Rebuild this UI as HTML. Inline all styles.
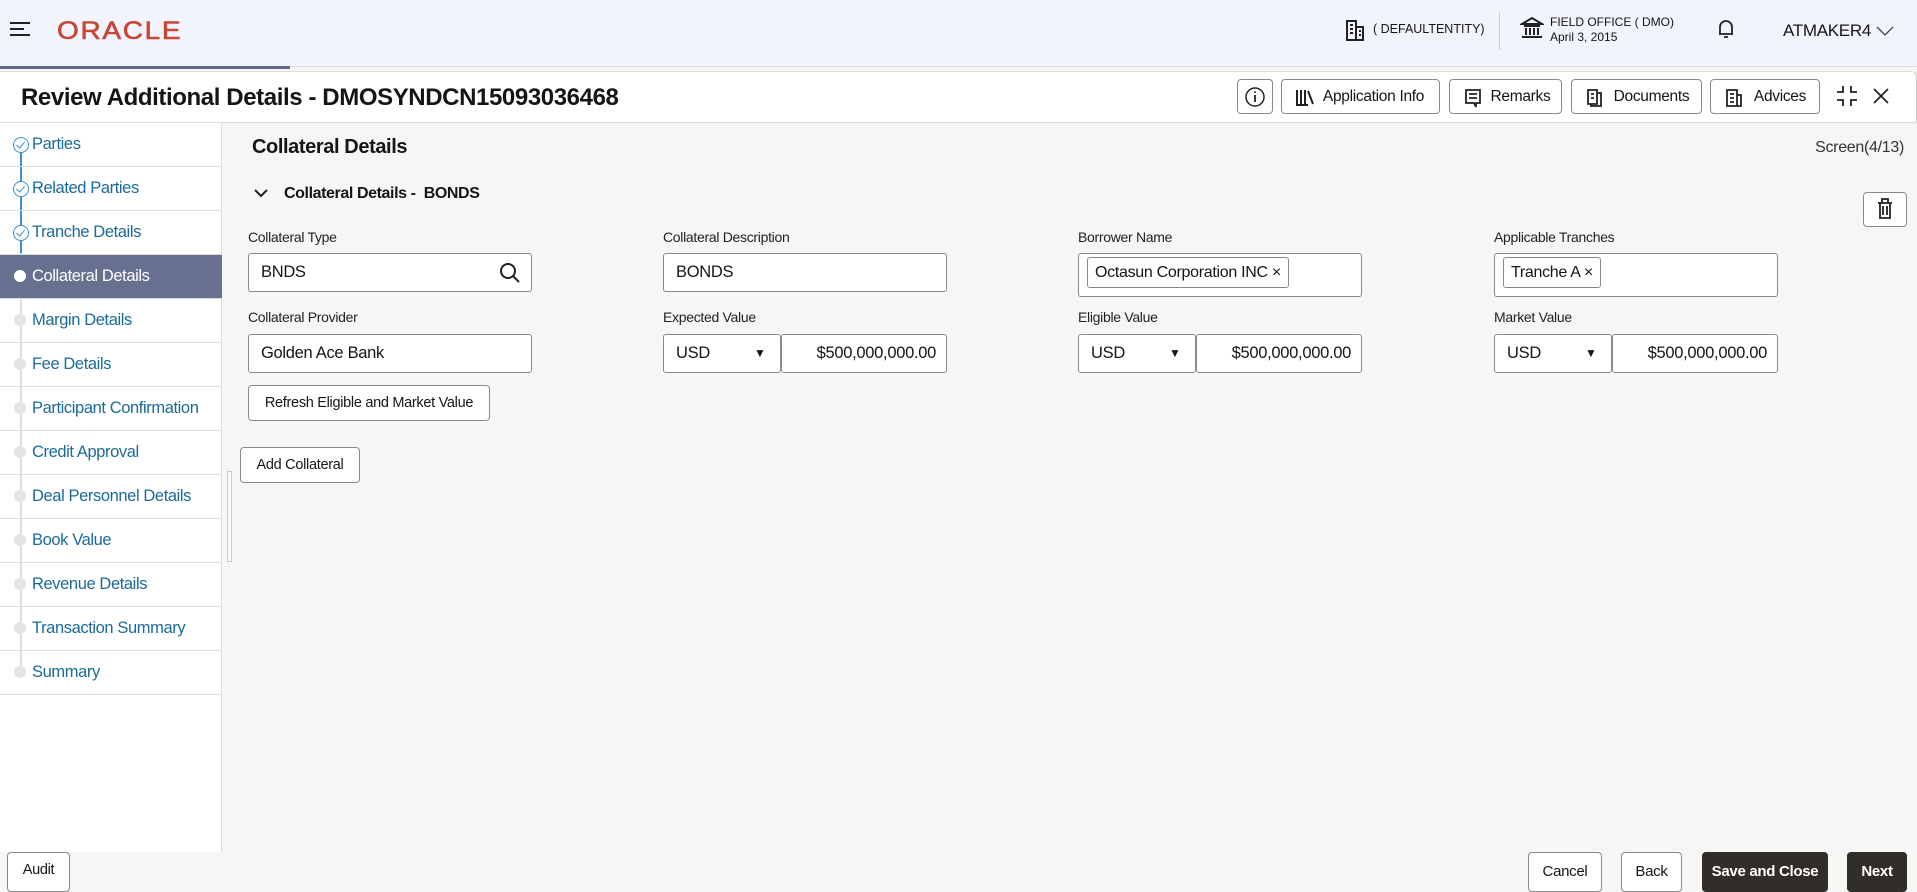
<!DOCTYPE html>
<html><head><meta charset="utf-8"><style>
*{box-sizing:border-box;margin:0;padding:0}
body{width:1917px;height:887px;overflow:hidden;font-family:"Liberation Sans",sans-serif;color:#161513;background:#f6f6f5;position:relative}
.abs{position:absolute}
.hdr{left:0;top:0;width:1917px;height:67px;background:#f1f4fc;border-bottom:1px solid #ddd}
.prog{left:0;top:66px;width:290px;height:3px;background:#5f6a8a}
.title{left:0;top:71px;width:1917px;height:52px;background:#fff;border-bottom:1px solid #ddd;border-top:1px solid #ddd;border-right:1px solid #ccc;border-top-right-radius:6px}
.side{left:0;top:123px;width:222px;height:729px;background:#fff;border-right:1px solid #ddd}
.item{position:absolute;left:0;width:222px;height:44px;border-bottom:1px solid #ddd;font-size:16.5px;color:#1a6a9a;padding-left:32px;line-height:42px;letter-spacing:-.4px}
.item.act{background:#687090;color:#fff}
.dot{position:absolute;left:14px;top:15px;width:12px;height:12px;border-radius:50%;background:#e4e4e4}
.act .dot{background:#fff}
.chk{position:absolute;left:13px;top:14px;width:16px;height:16px;border:1.5px solid #3a8fd0;border-radius:50%;background:#fff}
.chk:after{content:"";position:absolute;left:4px;top:2px;width:4px;height:7px;border:solid #3a8fd0;border-width:0 1.3px 1.3px 0;transform:rotate(40deg)}
.vline{position:absolute;left:20px;width:1.5px;background:#3a8fd0}
.lbl{position:absolute;font-size:14px;color:#222;letter-spacing:-.3px}
.inp{position:absolute;height:39px;background:#fff;border:1px solid #8a8a8a;border-radius:3px;font-size:16.5px;line-height:37px;padding-left:12px;letter-spacing:-.3px}
.btn{position:absolute;background:#fff;border:1px solid #8a8a8a;border-radius:4px;font-size:14.5px;text-align:center;letter-spacing:-.3px}
.chip{display:inline-block;border:1px solid #8a8a8a;border-radius:3px;height:31px;line-height:29px;padding:0 7px;margin:3px 0 0 -4px;font-size:16px}
.dark{background:#312d2a;color:#fff;border-color:#312d2a;font-weight:bold}
</style></head><body>
<div class="abs hdr"></div>
<div class="abs prog"></div>
<svg class="abs" style="left:9px;top:21px" width="24" height="16"><path d="M1 2h20M1 8h14M1 14h20" stroke="#222" stroke-width="2"/></svg>
<div class="abs" style="left:57px;top:18px;font-size:25px;line-height:26px;color:#c74634;letter-spacing:1.5px;transform:scaleX(1.12);transform-origin:left;-webkit-text-stroke:.6px #c74634">ORACLE</div>
<svg class="abs" style="left:1345px;top:19px" width="20" height="22"><path d="M2 21V2h9v19M11 8h7v13M1 21h18M5 6h3M5 10h3M5 14h3M14 12h2M14 16h2" stroke="#222" stroke-width="2" fill="none"/></svg>
<div class="abs" style="left:1373px;top:22px;font-size:12.5px">( DEFAULTENTITY)</div>
<div class="abs" style="left:1499px;top:12px;width:1px;height:38px;background:#ccc"></div>
<svg class="abs" style="left:1520px;top:16px" width="24" height="24"><path d="M2 8L12 2l10 6zM4 10h16M6 12v7M10 12v7M14 12v7M18 12v7M2 21h20" stroke="#222" stroke-width="2" fill="none"/></svg>
<div class="abs" style="left:1550px;top:15px;font-size:12px;line-height:15px">FIELD OFFICE ( DMO)<br>April 3, 2015</div>
<svg class="abs" style="left:1717px;top:18px" width="18" height="22"><path d="M3 16V9a6 6 0 0112 0v7H2h14M7 19h4" stroke="#222" stroke-width="1.8" fill="none"/></svg>
<div class="abs" style="left:1783px;top:21px;font-size:17px;letter-spacing:-.3px">ATMAKER4</div>
<svg class="abs" style="left:1876px;top:25px" width="18" height="12"><path d="M1 2l8 8 8-8" stroke="#444" stroke-width="1.3" fill="none"/></svg>

<div class="abs title"></div>
<div class="abs" style="left:21px;top:84px;font-size:24px;font-weight:bold;letter-spacing:-.4px">Review Additional Details - DMOSYNDCN15093036468</div>
<div class="btn" style="left:1237px;top:79px;width:36px;height:35px"><svg width="22" height="22" style="margin-top:6px"><circle cx="11" cy="11" r="9" stroke="#222" stroke-width="1.5" fill="none"/><path d="M11 9v7M11 5.5v1.5" stroke="#222" stroke-width="1.8"/></svg></div>
<div class="btn" style="left:1281px;top:79px;width:159px;height:35px;line-height:33px;font-size:15.5px;padding-left:26px">Application Info<svg class="abs" style="left:13px;top:8px" width="20" height="18"><path d="M2 2v14M6 2v14M10 2v14M13 3l5 13M1 17h12" stroke="#222" stroke-width="2" fill="none"/></svg></div>
<div class="btn" style="left:1449px;top:79px;width:113px;height:35px;line-height:33px;font-size:15.5px;padding-left:30px">Remarks<svg class="abs" style="left:14px;top:8px" width="18" height="20"><path d="M2 2h14v13h-4v4l-2-4H2zM5 6h8M5 10h8" stroke="#222" stroke-width="1.8" fill="none"/></svg></div>
<div class="btn" style="left:1571px;top:79px;width:131px;height:35px;line-height:33px;font-size:15.5px;padding-left:30px">Documents<svg class="abs" style="left:14px;top:8px" width="18" height="20"><path d="M2 2h9v14H2zM11 5h4v13H5v-2M5 6h3M5 10h3" stroke="#222" stroke-width="1.8" fill="none"/></svg></div>
<div class="btn" style="left:1710px;top:79px;width:110px;height:35px;line-height:33px;font-size:15.5px;padding-left:30px">Advices<svg class="abs" style="left:14px;top:8px" width="18" height="20"><path d="M2 2h10v16H2zM12 7h4v11h-4M5 6h4M5 10h4M5 14h4" stroke="#222" stroke-width="1.8" fill="none"/></svg></div>
<svg class="abs" style="left:1836px;top:85px" width="22" height="22"><path d="M7 1v6H1M15 1v6h6M7 21v-6H1M15 21v-6h6" stroke="#222" stroke-width="1.8" fill="none"/></svg>
<svg class="abs" style="left:1873px;top:88px" width="16" height="16"><path d="M1 1l14 14M15 1L1 15" stroke="#222" stroke-width="1.8"/></svg>

<div class="abs side">
<div class="vline" style="top:20px;height:110px"></div>
<div class="vline" style="top:130px;height:420px;background:#ddd"></div>
<div class="item" style="top:0"><span class="chk"></span>Parties</div>
<div class="item" style="top:44px"><span class="chk"></span>Related Parties</div>
<div class="item" style="top:88px"><span class="chk"></span>Tranche Details</div>
<div class="item act" style="top:132px"><span class="dot"></span>Collateral Details</div>
<div class="item" style="top:176px"><span class="dot"></span>Margin Details</div>
<div class="item" style="top:220px"><span class="dot"></span>Fee Details</div>
<div class="item" style="top:264px"><span class="dot"></span>Participant Confirmation</div>
<div class="item" style="top:308px"><span class="dot"></span>Credit Approval</div>
<div class="item" style="top:352px"><span class="dot"></span>Deal Personnel Details</div>
<div class="item" style="top:396px"><span class="dot"></span>Book Value</div>
<div class="item" style="top:440px"><span class="dot"></span>Revenue Details</div>
<div class="item" style="top:484px"><span class="dot"></span>Transaction Summary</div>
<div class="item" style="top:528px"><span class="dot"></span>Summary</div>
</div>
<div class="abs" style="left:227px;top:471px;width:5px;height:91px;border:1px solid #ccc;background:#fafafa"></div>

<div class="abs" style="left:252px;top:136px;font-size:20px;font-weight:bold;letter-spacing:-.4px">Collateral Details</div>
<div class="abs" style="left:1810px;top:139px;font-size:16px;color:#333;width:94px;text-align:right;letter-spacing:-.3px">Screen(4/13)</div>
<svg class="abs" style="left:254px;top:189px" width="14" height="10"><path d="M1 1l6 6 6-6" stroke="#222" stroke-width="2" fill="none"/></svg>
<div class="abs" style="left:284px;top:185px;font-size:16px;font-weight:bold;letter-spacing:-.4px">Collateral Details -&nbsp; BONDS</div>
<div class="btn" style="left:1863px;top:192px;width:44px;height:35px"><svg width="20" height="24" style="margin-top:4px"><path d="M3 6h14M7 6V2h6v4M5 6v15h10V6M8 9v9M12 9v9" stroke="#222" stroke-width="1.8" fill="none"/></svg></div>

<div class="lbl" style="left:248px;top:229px">Collateral Type</div>
<div class="inp" style="left:248px;top:253px;width:284px">BNDS<svg class="abs" style="left:250px;top:8px" width="22" height="22"><circle cx="9" cy="9" r="7" stroke="#222" stroke-width="2" fill="none"/><path d="M14 14l6 6" stroke="#222" stroke-width="2"/></svg></div>
<div class="lbl" style="left:663px;top:229px">Collateral Description</div>
<div class="inp" style="left:663px;top:253px;width:284px">BONDS</div>
<div class="lbl" style="left:1078px;top:229px">Borrower Name</div>
<div class="inp" style="left:1078px;top:253px;width:284px;height:44px"><span class="chip">Octasun Corporation INC ×</span></div>
<div class="lbl" style="left:1494px;top:229px">Applicable Tranches</div>
<div class="inp" style="left:1494px;top:253px;width:284px;height:44px"><span class="chip">Tranche A ×</span></div>

<div class="lbl" style="left:248px;top:309px">Collateral Provider</div>
<div class="inp" style="left:248px;top:334px;width:284px">Golden Ace Bank</div>
<div class="lbl" style="left:663px;top:309px">Expected Value</div>
<div class="lbl" style="left:1078px;top:309px">Eligible Value</div>
<div class="lbl" style="left:1494px;top:309px">Market Value</div>
<div class="inp" style="left:663px;top:334px;width:118px">USD<span class="abs" style="left:90px;top:0;font-size:12px">▼</span></div>
<div class="inp" style="left:781px;top:334px;width:166px;text-align:right;padding-right:10px">$500,000,000.00</div>
<div class="inp" style="left:1078px;top:334px;width:118px">USD<span class="abs" style="left:90px;top:0;font-size:12px">▼</span></div>
<div class="inp" style="left:1196px;top:334px;width:166px;text-align:right;padding-right:10px">$500,000,000.00</div>
<div class="inp" style="left:1494px;top:334px;width:118px">USD<span class="abs" style="left:90px;top:0;font-size:12px">▼</span></div>
<div class="inp" style="left:1612px;top:334px;width:166px;text-align:right;padding-right:10px">$500,000,000.00</div>

<div class="btn" style="left:248px;top:385px;width:242px;height:36px;line-height:34px">Refresh Eligible and Market Value</div>
<div class="btn" style="left:240px;top:447px;width:120px;height:36px;line-height:34px">Add Collateral</div>

<div class="btn" style="left:7px;top:852px;width:63px;height:40px;line-height:34px">Audit</div>
<div class="btn" style="left:1528px;top:852px;width:74px;height:40px;line-height:38px;font-size:15px">Cancel</div>
<div class="btn" style="left:1621px;top:852px;width:61px;height:40px;line-height:38px;font-size:15px">Back</div>
<div class="btn dark" style="left:1702px;top:852px;width:126px;height:40px;line-height:38px;font-size:15px">Save and Close</div>
<div class="btn dark" style="left:1847px;top:852px;width:60px;height:40px;line-height:38px;font-size:15px">Next</div>
</body></html>
